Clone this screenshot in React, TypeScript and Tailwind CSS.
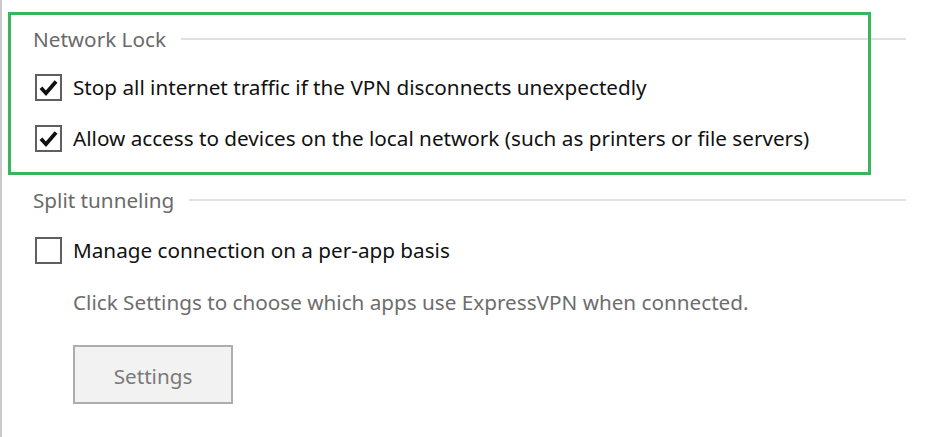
import { ReactNode } from "react";

function CheckBox({ checked }: { checked: boolean }) {
  return (
    <div className="w-[27px] h-[27px] shrink-0 border-2 border-[#5f5f5f] bg-white flex items-center justify-center">
      {checked && (
        <svg width="21" height="21" viewBox="0 0 20 20">
          <path d="M2.8 10.2 L7.6 15.4 L17.2 4.2" fill="none" stroke="#111" strokeWidth="3.6" strokeLinecap="butt" strokeLinejoin="miter" />
        </svg>
      )}
    </div>
  );
}

function SectionHeader({ title, className }: { title: string; className?: string }) {
  return (
    <div className={`flex items-center h-[24px] ${className ?? ""}`}>
      <span className="text-[20.7px] text-[#6a6a6a] leading-none">{title}</span>
      <div className="flex-1 h-[2px] bg-[#e0e0e0] ml-[15px] mr-[19px]" />
    </div>
  );
}

function Row({ checked, children, className }: { checked: boolean; children: ReactNode; className?: string }) {
  return (
    <label className={`flex items-center h-[27px] gap-[11px] ${className ?? ""}`}>
      <CheckBox checked={checked} />
      <span className="text-[20.7px] text-[#111] leading-none whitespace-nowrap">{children}</span>
    </label>
  );
}

export default function App() {
  return (
    <div
      className="relative w-[925px] h-[437px] bg-white border-l-2 border-[#c9c9c9] overflow-hidden"
      style={{ fontFamily: '"Noto Sans", "Open Sans", sans-serif' }}
    >
      <div className="pl-[31px] pt-[27px] flex flex-col">
        <SectionHeader title="Network Lock" />
        <Row checked className="mt-[23px] ml-[2px]">Stop all internet traffic if the VPN disconnects unexpectedly</Row>
        <Row checked className="mt-[24px] ml-[2px]">Allow access to devices on the local network (such as printers or file servers)</Row>

        <SectionHeader title="Split tunneling" className="mt-[36px]" />
        <Row checked={false} className="mt-[25px] ml-[2px]">Manage connection on a per-app basis</Row>
        <p className="mt-[26px] ml-[40px] h-[24px] flex items-center text-[20.7px] text-[#6d6d6d] leading-none">
          Click Settings to choose which apps use ExpressVPN when connected.
        </p>
        <button className="mt-[31px] ml-[40px] w-[160px] h-[59px] pt-[4px] border-2 border-[#adadad] bg-[#f2f2f2] text-[20.7px] text-[#7a7a7a]">
          Settings
        </button>
      </div>

      {/* highlight around Network Lock */}
      <div className="absolute left-[6px] top-[12px] w-[863px] h-[163px] border-[3px] border-[#3cb55a] pointer-events-none" />
    </div>
  );
}
